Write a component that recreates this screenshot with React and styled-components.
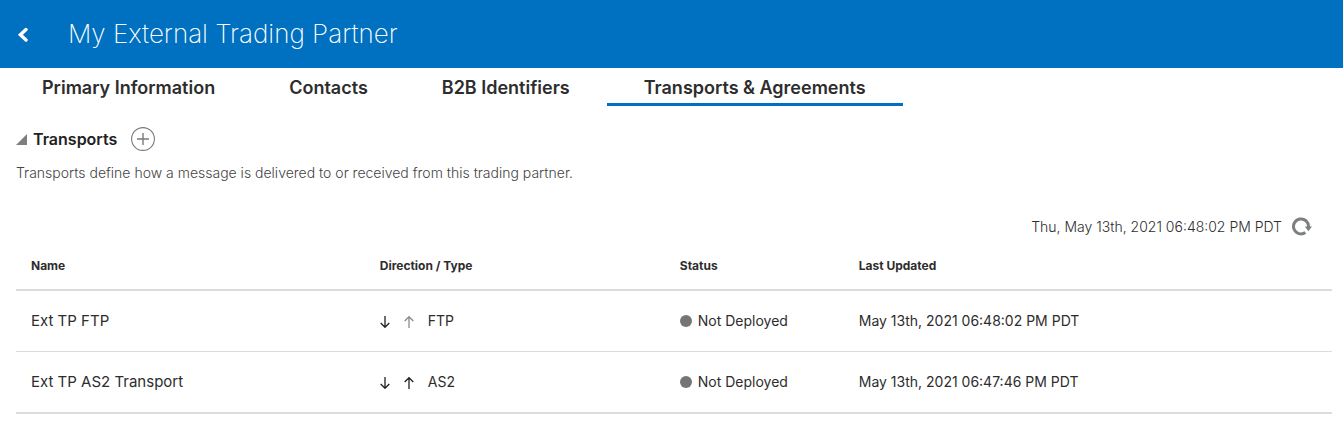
import React from "react";
import styled, { createGlobalStyle } from "styled-components";

const GlobalStyle = createGlobalStyle`
  *, *::before, *::after { box-sizing: border-box; }
  body {
    margin: 0;
    background: #fff;
    color: #2d2d2d;
    font-family: Inter, "Liberation Sans", sans-serif;
    font-size: 14px;
    line-height: 20px;
  }
  button {
    margin: 0;
    padding: 0;
    border: 0;
    background: none;
    color: inherit;
    font: inherit;
    cursor: pointer;
  }
  svg { display: block; }
`;

const Header = styled.header`
  display: flex;
  align-items: center;
  gap: 38px;
  height: 68px;
  padding: 0 16px;
  background: #0070c0;
  color: #fff;
`;

const BackButton = styled.button`
  flex: none;
`;

const Title = styled.h1`
  margin: 0;
  font-size: 26px;
  line-height: 36px;
  font-weight: 200;
`;

const Tabs = styled.nav`
  display: flex;
  padding-left: 5px;
`;

const Tab = styled.button`
  && {
    padding: 8px 37px 3px;
    border-bottom: 3px solid ${(p) => (p.$active ? "#0070c0" : "transparent")};
    font-size: 18px;
    line-height: 24px;
    font-weight: 600;
    white-space: nowrap;
  }
`;

const Content = styled.main`
  padding: 21px 11px 14px 16px;
`;

const SectionHeading = styled.div`
  display: flex;
  align-items: center;
  gap: 14px;
`;

const SectionTitle = styled.h2`
  margin: 0;
  font-size: 16px;
  line-height: 24px;
  font-weight: 600;
  color: #222;
`;

const Disclosure = styled.button`
  display: flex;
  align-items: center;
  gap: 6px;
`;

const AddButton = styled.button`
  flex: none;
`;

const Description = styled.p`
  margin: 12px 0 0;
  color: #444;
  font-weight: 300;
`;

const RefreshBar = styled.div`
  display: flex;
  justify-content: flex-end;
  align-items: center;
  gap: 10px;
  margin-top: 32px;
  padding-right: 20px;
  font-weight: 300;
  line-height: 24px;
`;

const Table = styled.table`
  width: 100%;
  margin-top: 3px;
  table-layout: fixed;
  border-collapse: separate;
  border-spacing: 0;
  border-bottom: 2px solid #dcdcdc;
`;

const Column = styled.col`
  width: ${(p) => p.$width};
`;

const HeadCell = styled.th`
  height: 49px;
  padding: 0 0 0 15px;
  border-bottom: 2px solid #dcdcdc;
  font-size: 12px;
  font-weight: 700;
  text-align: left;
`;

const Row = styled.tr`
  & + & > td { border-top: 1px solid #dcdcdc; }
`;

const Cell = styled.td`
  box-sizing: content-box;
  height: 60px;
  padding: 0 0 0 15px;
  font-size: ${(p) => (p.$primary ? "15px" : "14px")};
`;

const Direction = styled.div`
  display: flex;
  align-items: center;
  gap: 14px;
`;

const Status = styled.div`
  display: flex;
  align-items: center;
  gap: 6px;
`;

const Dot = styled.span`
  width: 12px;
  height: 12px;
  border-radius: 50%;
  background: #757575;
`;

function Arrow({ up, muted }) {
  return (
    <svg width="10" height="14" viewBox="0 0 10 14" fill="none" stroke={muted ? "#8c8c8c" : "#222"} strokeWidth="1.3" role="img" aria-label={up ? "Outbound" : "Inbound"}>
      <path d={up ? "M5 14V3M.7 7 5 2.7 9.3 7" : "M5 2v11M.7 9 5 13.3 9.3 9"} />
    </svg>
  );
}

const tabs = ["Primary Information", "Contacts", "B2B Identifiers", "Transports & Agreements"];

const transports = [
  { name: "Ext TP FTP", type: "FTP", outbound: false, updated: "May 13th, 2021 06:48:02 PM PDT" },
  { name: "Ext TP AS2 Transport", type: "AS2", outbound: true, updated: "May 13th, 2021 06:47:46 PM PDT" },
];

export default function App() {
  return (
    <>
      <GlobalStyle />
      <Header>
        <BackButton aria-label="Back">
          <svg width="14" height="16" viewBox="0 0 14 16" fill="none" stroke="#fff" strokeWidth="3.4" strokeLinecap="round">
            <path d="M10 3.6 4.4 8.8l5.6 5.2" />
          </svg>
        </BackButton>
        <Title>My External Trading Partner</Title>
      </Header>
      <Tabs>
        {tabs.map((label, i) => (
          <Tab key={label} $active={i === 3} aria-current={i === 3 ? "page" : undefined}>
            {label}
          </Tab>
        ))}
      </Tabs>
      <Content>
        <SectionHeading>
          <SectionTitle>
            <Disclosure aria-expanded="true">
              <svg width="11" height="11" viewBox="0 0 11 11" fill="#7d8083">
                <path d="M11 0v11H0z" />
              </svg>
              Transports
            </Disclosure>
          </SectionTitle>
          <AddButton aria-label="Add transport">
            <svg width="24" height="24" viewBox="0 0 24 24" fill="none" stroke="#777b7e">
              <circle cx="12" cy="12" r="11.4" strokeWidth="1.1" />
              <path d="M12 6v12M6 12h12" strokeWidth="1.4" />
            </svg>
          </AddButton>
        </SectionHeading>
        <Description>Transports define how a message is delivered to or received from this trading partner.</Description>
        <RefreshBar>
          <span>Thu, May 13th, 2021 06:48:02 PM PDT</span>
          <button aria-label="Refresh">
            <svg width="20" height="20" viewBox="0 0 20 20">
              <path d="M13.4 15.5A7.5 7.5 0 1 1 16.5 10" fill="none" stroke="#7d8083" strokeWidth="3" />
              <path d="M12.8 9.6H20l-3.6 4.6z" fill="#7d8083" />
            </svg>
          </button>
        </RefreshBar>
        <Table>
          <colgroup>
            <Column $width="26.5%" />
            <Column $width="22.8%" />
            <Column $width="13.6%" />
            <Column $width="auto" />
          </colgroup>
          <thead>
            <tr>
              <HeadCell scope="col">Name</HeadCell>
              <HeadCell scope="col">Direction / Type</HeadCell>
              <HeadCell scope="col">Status</HeadCell>
              <HeadCell scope="col">Last Updated</HeadCell>
            </tr>
          </thead>
          <tbody>
            {transports.map((t) => (
              <Row key={t.name}>
                <Cell $primary>{t.name}</Cell>
                <Cell>
                  <Direction>
                    <Arrow />
                    <Arrow up muted={!t.outbound} />
                    <span>{t.type}</span>
                  </Direction>
                </Cell>
                <Cell>
                  <Status>
                    <Dot />
                    Not Deployed
                  </Status>
                </Cell>
                <Cell>{t.updated}</Cell>
              </Row>
            ))}
          </tbody>
        </Table>
      </Content>
    </>
  );
}
